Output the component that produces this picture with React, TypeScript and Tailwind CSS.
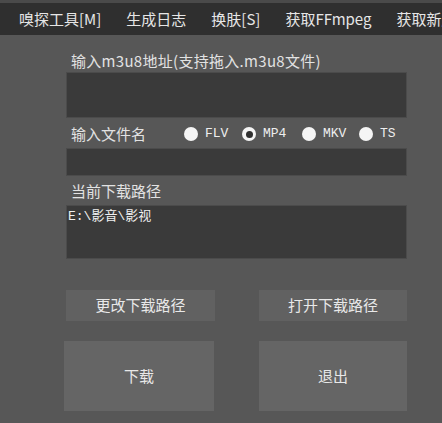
import { useState } from "react";

const cjk = { fontFamily: '"Noto Sans CJK SC", "Liberation Sans", sans-serif' };
const mono = { fontFamily: '"Liberation Mono", "Noto Sans CJK SC", monospace' };

const menus = ["嗅探工具[M]", "生成日志", "换肤[S]", "获取FFmpeg", "获取新版本"];
const formats = [
  { name: "FLV", w: "w-[58px]" },
  { name: "MP4", w: "w-[60px]" },
  { name: "MKV", w: "w-[57px]" },
  { name: "TS", w: "w-auto" },
];

function Radio({ checked }: { checked: boolean }) {
  return (
    <span className="flex h-[14px] w-[14px] items-center justify-center rounded-full bg-[#f5f5f5]">
      {checked && <span className="h-[7px] w-[7px] rounded-full bg-[#2f2f2f]" />}
    </span>
  );
}

export default function App() {
  const [format, setFormat] = useState("MP4");

  return (
    <div className="flex h-[423px] w-[442px] flex-col overflow-hidden bg-[#575757]" style={cjk}>
      <div className="h-[3px] bg-[#4a4a4a]" />
      {/* menu bar */}
      <div className="flex h-[32px] items-center gap-[25px] overflow-hidden whitespace-nowrap bg-[#2f2f2f] pl-[19px] text-[15px] text-[#e6e6e6]">
        {menus.map((m) => (
          <span key={m}>{m}</span>
        ))}
      </div>

      <div className="ml-[66px] flex w-[341px] flex-col text-[15px] text-[#e2e2e2]">
        <div className="mt-[16px] h-[20px] pl-[5px] leading-[20px] tracking-[0.3px]">输入m3u8地址(支持拖入.m3u8文件)</div>
        <div className="mt-[1px] h-[46px] border border-[#4b4b4b] bg-[#3a3a3a]" />

        <div className="mt-[6px] flex h-[20px] items-center leading-[20px]">
          <span className="w-[118px] pl-[5px]">输入文件名</span>
          {formats.map((f) => (
            <button
              key={f.name}
              onClick={() => setFormat(f.name)}
              className={`flex items-center gap-[7px] ${f.w}`}
            >
              <Radio checked={format === f.name} />
              <span className="text-[13px] text-[#eeeeee]" style={mono}>
                {f.name}
              </span>
            </button>
          ))}
        </div>
        <div className="mt-[4px] h-[28px] border border-[#4b4b4b] bg-[#3a3a3a]" />

        <div className="mt-[5px] h-[20px] pl-[5px] leading-[20px]">当前下载路径</div>
        <div className="mt-[4px] h-[54px] border border-[#4b4b4b] bg-[#3a3a3a] pl-[1px] pt-[2px] text-[13px] leading-[18px] text-[#f0f0f0]" style={mono}>
          E:\影音\影视
        </div>

        <div className="mt-[31px] flex justify-between">
          <button className="h-[31px] w-[149px] bg-[#616161] text-[15px] text-[#e8e8e8]">更改下载路径</button>
          <button className="h-[31px] w-[148px] bg-[#616161] text-[15px] text-[#e8e8e8]">打开下载路径</button>
        </div>
        <div className="mt-[20px] flex justify-between">
          <button className="-ml-[2px] h-[70px] w-[150px] bg-[#656565] text-[15px] text-[#e8e8e8]">下载</button>
          <button className="h-[70px] w-[148px] bg-[#656565] text-[15px] text-[#e8e8e8]">退出</button>
        </div>
      </div>
    </div>
  );
}
